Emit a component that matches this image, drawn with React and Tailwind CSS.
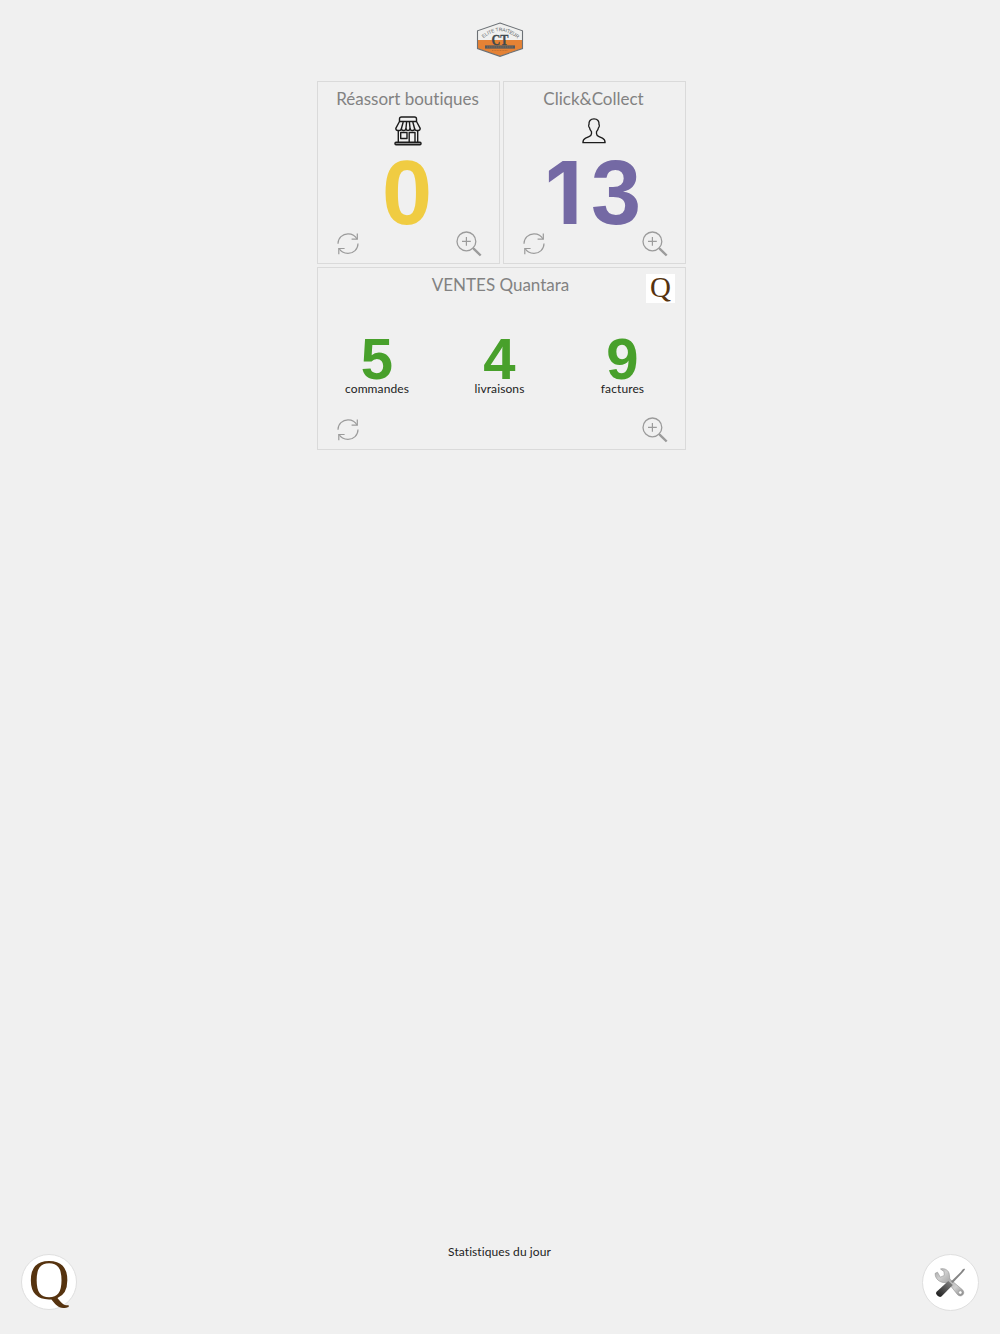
import clsx from "clsx";

function RefreshIcon() {
  return (
    <svg width="24" height="24" viewBox="0 0 24 24" fill="none" stroke="#9b9b9b" strokeWidth="1.2">
      <path d="M2 12.7C2 7 6.500 2.800 12 2.800C16 2.800 19.400 4.800 21 8.100" />
      <path d="M21.300 2.500V8.200H15.600" />
      <path d="M22 12.500C22 18.200 17.500 22.400 12 22.400C8 22.400 4.600 20.400 3 17.300" />
      <path d="M2.800 23.300V17.500H8.600" />
    </svg>
  );
}

function ZoomIcon() {
  return (
    <svg width="26" height="26" viewBox="0 0 26 26" fill="none" stroke="#9b9b9b">
      <circle cx="10.400" cy="10.400" r="9.400" strokeWidth="1.300" />
      <path d="M10.400 6V14.800M6 10.400H14.800" strokeWidth="1.200" />
      <path d="M17 17L18.200 18.200" strokeWidth="1.300" />
      <path d="M17.600 17.600L24.700 24.500" strokeWidth="2.400" />
    </svg>
  );
}

function ShopIcon() {
  return (
    <svg
      width="28"
      height="30"
      viewBox="0 0 28 30"
      fill="none"
      stroke="#1c1c1c"
      strokeWidth="1.400"
      strokeLinejoin="round"
    >
      <path d="M5.500 5.500V3Q5.500 1 7.500 1H20.500Q22.500 1 22.500 3V5.500" />
      <path d="M5.500 5.500H22.500L26.200 12.300Q26.200 14.500 24 14.500H22.500Q21 14.500 20.700 12.800Q20.200 14.500 18.700 14.500H18Q16.500 14.500 16.100 12.800Q15.600 14.500 14 14.500Q12.400 14.500 11.900 12.800Q11.500 14.500 10 14.500H9.300Q7.800 14.500 7.300 12.800Q7 14.500 5.500 14.500H4Q1.800 14.500 1.800 12.300Z" />
      <path d="M9.200 6L7.300 13M12.600 6L11.900 13M15.400 6L16.100 13M18.800 6L20.700 13" />
      <path d="M4.300 15V26M23.700 15V26" />
      <rect x="6.700" y="16.500" width="6.300" height="6" />
      <path d="M15.200 26V16.500H21V26" />
      <rect x="1" y="26.200" width="26" height="2.600" rx="1" fill="#8a8a8a" />
    </svg>
  );
}

function PersonIcon() {
  return (
    <svg width="24" height="26" viewBox="0 0 24 26" fill="none" stroke="#1c1c1c" strokeWidth="1.300">
      <path
        d="M12 0.900C8.300 0.900 6.700 3.200 7 6.500C6.400 7 6.600 9 7.500 9.700C7.800 11.800 8.600 12.600 9.500 13.700V15.600C9.400 17.300 8.500 18 7 18.700L3.600 20.200C1.500 21.300 0.900 22.500 0.900 24.700H23.100C23.100 22.500 22.500 21.300 20.400 20.200L17 18.700C15.500 18 14.600 17.300 14.500 15.600V13.700C15.400 12.600 16.200 11.800 16.500 9.700C17.400 9 17.600 7 17 6.500C17.300 3.200 15.700 0.900 12 0.900Z"
        strokeLinejoin="round"
      />
    </svg>
  );
}

function ToolsIcon() {
  return (
    <svg width="32" height="32" viewBox="0 0 32 32">
      <defs>
        <linearGradient id="wrench" x1="0" y1="0" x2="1" y2="1">
          <stop offset="0" stopColor="#a5a5a5" />
          <stop offset="0.250" stopColor="#cfcfcf" />
          <stop offset="0.450" stopColor="#b0b0b0" />
          <stop offset="0.700" stopColor="#d0d0d0" />
          <stop offset="1" stopColor="#858585" />
        </linearGradient>
        <linearGradient id="handle" x1="0" y1="1" x2="1" y2="0">
          <stop offset="0" stopColor="#161616" />
          <stop offset="1" stopColor="#8a8a8a" />
        </linearGradient>
      </defs>
      <path
        d="M6.500 2C10.500 0.600 15 3.400 15.300 7.500L15.800 12L28.500 22.800C32 26.300 27.500 31.200 23.600 27.700L14.500 16.200L11 15.600C6 15.700 0.800 12 1.200 6.300L3.500 5.200L6.300 10.200L10.300 8.400L10 4.500Z"
        fill="url(#wrench)"
        stroke="#929292"
        strokeWidth="0.600"
      />
      <circle cx="26.300" cy="25.500" r="1.700" fill="#ffffff" stroke="#888888" strokeWidth="0.500" />
      <path d="M17 14.500L27 4.800L28.300 2.700L30.300 1.500L31 2.500L29.300 4.800L28.200 6L18.700 16Z" fill="#858585" />
      <path d="M2.300 25L14.300 14L18.800 18L7.400 29.500Q5.700 30.700 3.300 28.600Q1.300 26.500 2.300 25Z" fill="url(#handle)" />
    </svg>
  );
}

function BrandLogo() {
  return (
    <svg width="48" height="36" viewBox="0 0 48 36">
      <path d="M24 1L46.500 8.800V26.500L24 34.300L1.500 26.500V8.800Z" fill="#f0f0ef" />
      <path d="M1.500 18H46.500V26.500L24 34.300L1.500 26.500Z" fill="#e58235" />
      <path d="M24 1L46.500 8.800V26.500L24 34.300L1.500 26.500V8.800Z" fill="none" stroke="#6b7075" strokeWidth="1.100" />
      <path id="logo-arc" d="M7.500 16.500Q24 1.500 42.500 17.500" fill="none" />
      <text fontFamily="Liberation Sans" fontSize="5" fill="#62676b">
        <textPath href="#logo-arc" textLength="38">ELITE TRAITEUR</textPath>
      </text>
      <text
        x="24"
        y="22.800"
        textAnchor="middle"
        textLength="17"
        lengthAdjust="spacingAndGlyphs"
        fontFamily="Liberation Serif"
        fontSize="14"
        fontWeight="700"
        fill="#41494e"
        stroke="#41494e"
        strokeWidth="0.300"
      >
        CT
      </text>
      <rect x="9" y="23.400" width="30" height="3.200" fill="#515a60" />
      <path d="M11 25H37" stroke="#a87855" strokeWidth="0.700" strokeDasharray="1.200 0.600" />
      <path d="M16 28.500H32" stroke="#b86d34" strokeWidth="0.800" strokeDasharray="1 0.600" />
    </svg>
  );
}

function CardTitle({ children, className }) {
  return (
    <h2
      className={clsx(
        "text-center text-[17px] leading-[22px] text-[#828282] whitespace-nowrap [font-variant-ligatures:none]",
        className
      )}
    >
      {children}
    </h2>
  );
}

function CardActions() {
  return (
    <div className="mt-auto flex items-start justify-between pl-[18px] pr-[17px] pb-[6px]">
      <button><RefreshIcon /></button>
      <button><ZoomIcon /></button>
    </div>
  );
}

function CounterCard({ title, icon, value, valueClass }) {
  return (
    <section className="flex h-[183px] flex-col border border-[#dadada] pt-[6px]">
      <CardTitle className="pr-[2px]">{title}</CardTitle>
      <div className="mt-[5px] flex h-[32px] items-center justify-center pr-[2px]">{icon}</div>
      <div
        className={clsx(
          "mt-[4px] h-[80px] pr-[3px] text-center font-['Liberation_Sans'] text-[90px] leading-[84px] font-bold",
          valueClass
        )}
      >
        {value}
      </div>
      <div className="-mt-[3px] flex flex-1 flex-col">
        <CardActions />
      </div>
    </section>
  );
}

const ventes = [
  { value: 5, label: "commandes" },
  { value: 4, label: "livraisons" },
  { value: 9, label: "factures" },
];

export default function App() {
  return (
    <div className="flex h-[1334px] w-[1000px] flex-col bg-[#f0f0f0] font-['Lato',sans-serif]">
      <header className="flex justify-center pt-[22px]">
        <BrandLogo />
      </header>

      <main className="mt-[23px] ml-[317px] grid w-[369px] grid-cols-2 gap-[3px]">
        <CounterCard
          title="Réassort boutiques"
          icon={<ShopIcon />}
          value="0"
          valueClass="text-[#f0cc42]"
        />
        <CounterCard
          title="Click&Collect"
          icon={<PersonIcon />}
          value={
            <>
              <span className="font-['Inter'] text-[86px] leading-[84px] tracking-[9px]">1</span>3
            </>
          }
          valueClass="text-[#7469a4]"
        />

        <section className="relative col-span-2 flex h-[183px] flex-col border border-[#dadada] pt-[6px]">
          <CardTitle className="-ml-[2px]">VENTES Quantara</CardTitle>
          <div className="absolute top-[6px] right-[10px] flex size-[29px] justify-center bg-white">
            <span className="font-['Liberation_Serif'] text-[29px] leading-[27px] text-[#56330f]">Q</span>
          </div>
          <div className="mt-[32px] -ml-px grid grid-cols-[120px_125px_121px] text-center">
            {ventes.map((item) => (
              <div key={item.label}>
                <div className="h-[52px] font-['Liberation_Sans'] text-[58px] leading-[62px] font-bold text-[#48a02b]">
                  {item.value}
                </div>
                <div className="text-[12px] leading-[18px] tracking-[0.1px] text-[#222222]">{item.label}</div>
              </div>
            ))}
          </div>
          <CardActions />
        </section>
      </main>

      <footer className="mt-auto flex h-[94px] justify-between px-[21px]">
        <button className="mt-[14px] flex size-[56px] justify-center rounded-full border border-[#dfdfdf] bg-white">
          <span className="font-['Liberation_Serif'] text-[57px] leading-[49px] text-[#56330f]">Q</span>
        </button>
        <p className="mt-[3px] text-[12px] leading-[18px] tracking-[0.08px] text-[#222222]">Statistiques du jour</p>
        <button className="mt-[14px] flex size-[57px] items-center justify-center rounded-full border border-[#dfdfdf] bg-white">
          <ToolsIcon />
        </button>
      </footer>
    </div>
  );
}
